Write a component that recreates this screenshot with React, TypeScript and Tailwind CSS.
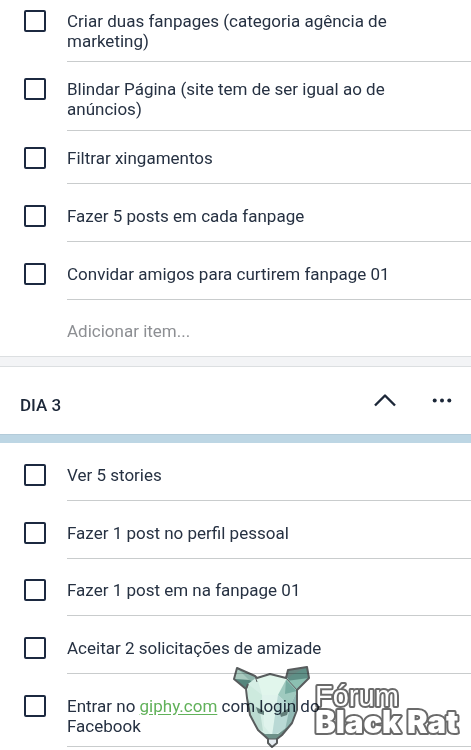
import type { ReactNode } from "react";

type Item = { id: string; label: ReactNode; spacing: string };

const dayTwo: Item[] = [
  { id: "fanpages", label: "Criar duas fanpages (categoria agência de marketing)", spacing: "pt-[11px] pb-[10px]" },
  { id: "blindar", label: "Blindar Página (site tem de ser igual ao de anúncios)", spacing: "pt-[17px] pb-[11px]" },
  { id: "filtrar", label: "Filtrar xingamentos", spacing: "pt-[17px] pb-[15px]" },
  { id: "posts", label: "Fazer 5 posts em cada fanpage", spacing: "pt-[22px] pb-[15px]" },
  { id: "convidar", label: "Convidar amigos para curtirem fanpage 01", spacing: "pt-[22px] pb-[15px]" },
];

const dayThree: Item[] = [
  { id: "stories", label: "Ver 5 stories", spacing: "pt-[22px] pb-[15px]" },
  { id: "perfil", label: "Fazer 1 post no perfil pessoal", spacing: "pt-[22px] pb-[15px]" },
  { id: "fanpage01", label: "Fazer 1 post em na fanpage 01", spacing: "pt-[21px] pb-[15px]" },
  { id: "amizade", label: "Aceitar 2 solicitações de amizade", spacing: "pt-[22px] pb-[15px]" },
  {
    id: "giphy",
    label: (
      <>
        Entrar no{" "}
        <a href="https://giphy.com" className="text-[#61b15a] underline underline-offset-2">giphy.com</a>{" "}
        com login do Facebook
      </>
    ),
    spacing: "pt-[22px] pb-[10px]",
  },
];

function CheckRow({ item }: { item: Item }) {
  return (
    <li className="flex items-stretch pl-6">
      <div className={`w-[43px] shrink-0 ${item.spacing}`}>
        <div className="flex h-5 items-center">
          <input
            id={item.id}
            type="checkbox"
            className="size-[22px] shrink-0 appearance-none rounded-[2px] border-2 border-[#1c2940] checked:bg-[#1c2940]"
          />
        </div>
      </div>
      <div className={`flex-1 border-b border-[#c9cccd] pr-20 ${item.spacing}`}>
        <label htmlFor={item.id} className="block">{item.label}</label>
      </div>
    </li>
  );
}

function Watermark() {
  return (
    <svg
      viewBox="0 0 230 86"
      className="pointer-events-none absolute right-[11px] bottom-0 h-[86px] w-[230px] mix-blend-multiply"
      role="img"
      aria-label="Fórum Black Rat"
    >
      {/* ears */}
      <path d="M7 4 L25 12 L27 19 L16 25 L4 15 Z" fill="#8fb5ac" />
      <path d="M7 4 L4 15 L19 16 Z" fill="#a9cabf" />
      <path d="M19 16 L27 19 L16 25 L4 15 Z" fill="#55857c" />
      <path d="M58 6 L77 3 L79 14 L67 25 L56 16 Z" fill="#5f8f86" />
      <path d="M79 14 L67 25 L56 17 Z" fill="#8cc0b2" />
      <path d="M58 6 L77 3 L62 11 L56 16 Z" fill="#698782" />

      {/* face facets */}
      <path d="M18 20 L27 13 L40 10 L57 14 L67 27 L67 46 L62 59 L52 71 L38 74 L28 66 L20 51 L17 34 Z" fill="#d5eee5" />
      <path d="M27 13 L40 10 L57 14 L48 31 L32 31 Z" fill="#e1f6ec" />
      <path d="M18 20 L32 31 L30 47 L17 34 Z" fill="#cdeade" />
      <path d="M32 31 L48 31 L42 72 L34 62 Z" fill="#dff3ec" />
      <path d="M57 14 L67 27 L60 42 L48 31 Z" fill="#9fcabf" />
      <path d="M56 16 L67 27 L55 30 Z" fill="#76aca1" />
      <path d="M48 31 L60 42 L56 65 L42 72 Z" fill="#b9d9d5" />
      <path d="M67 27 L67 46 L62 59 L55 66 L60 42 Z" fill="#91b9b4" />
      <path d="M17 34 L30 47 L33 67 L28 66 L20 51 Z" fill="#bbdad0" />
      <path d="M28 66 L35 70 L48 70 L60 61 L52 72 L47 75 L38 75 Z" fill="#6d9189" />
      <path d="M26 43 L34 47 L34 51 L28 49 Z M50 50 L59 44 L57 51 L51 53 Z" fill="#627d79" />
      <path d="M38 75 H47 L47 79 L42 83 L38 79 Z" fill="#e6edf2" />

      <g fill="none" stroke="#585c5d" strokeWidth="2" strokeLinejoin="round">
        <path d="M18 20 L16 25 L4 15 L7 4 L25 12 L27 14 L40 10 L56 14 L58 6 L77 3 L79 14 L67 26 L67 46 L62 59 L52 71 L47 75 L47 79 L42 83 L38 79 L38 75 L28 66 L20 51 L17 34 L16 25" />
        <path d="M25 12 L27 18 M56 14 L67 26 M38 75 H47" strokeWidth="1" />
      </g>

      <g
        fill="#fff"
        stroke="#6a6a6a"
        strokeWidth="4"
        strokeLinejoin="round"
        paintOrder="stroke"
        fontFamily="Inter, 'Liberation Sans', sans-serif"
      >
        <text x="85" y="42" fontSize="29" fontFamily="'Liberation Sans', sans-serif">Fórum</text>
        <text x="85" y="69" fontSize="31" fontWeight="900">Black Rat</text>
      </g>
    </svg>
  );
}

export default function App() {
  return (
    <main className="relative min-h-screen bg-white pb-[3px] font-[Roboto,sans-serif] text-[17px] leading-5 text-[#263142]">
      <section>
        <ul>
          {dayTwo.map((item) => <CheckRow key={item.id} item={item} />)}
        </ul>
        <div className="pt-[21px] pr-6 pb-[15px] pl-[67px]">
          <input
            aria-label="Adicionar item"
            placeholder="Adicionar item..."
            className="block h-5 w-full outline-none placeholder:text-[#8d8f93]"
          />
        </div>
      </section>

      <div className="h-[11px] border-y border-[#dcdfe1] bg-[#f3f4f6]" />

      <section>
        <header className="flex h-[68px] items-center border-b border-[#b3cbd9] pr-[17px] pl-5">
          <h2 className="flex-1 pt-2 font-medium text-[#1c2738]">DIA 3</h2>
          <div className="flex gap-[33px] text-[#1c2738]">
            <button type="button" aria-label="Recolher lista">
              <svg viewBox="0 0 24 24" className="size-6" fill="none" stroke="currentColor" strokeWidth="2.4">
                <path d="M2 16.5 L12 6.5 L22 16.5" strokeLinejoin="round" />
              </svg>
            </button>
            <button type="button" aria-label="Mais opções">
              <svg viewBox="0 0 24 24" className="size-6" fill="currentColor">
                <circle cx="4.7" cy="11.5" r="2" />
                <circle cx="12" cy="11.5" r="2" />
                <circle cx="19.3" cy="11.5" r="2" />
              </svg>
            </button>
          </div>
        </header>
        <div className="h-2 bg-[#bdd6e4]" />
        <ul>
          {dayThree.map((item) => <CheckRow key={item.id} item={item} />)}
        </ul>
      </section>
      <Watermark />
    </main>
  );
}
